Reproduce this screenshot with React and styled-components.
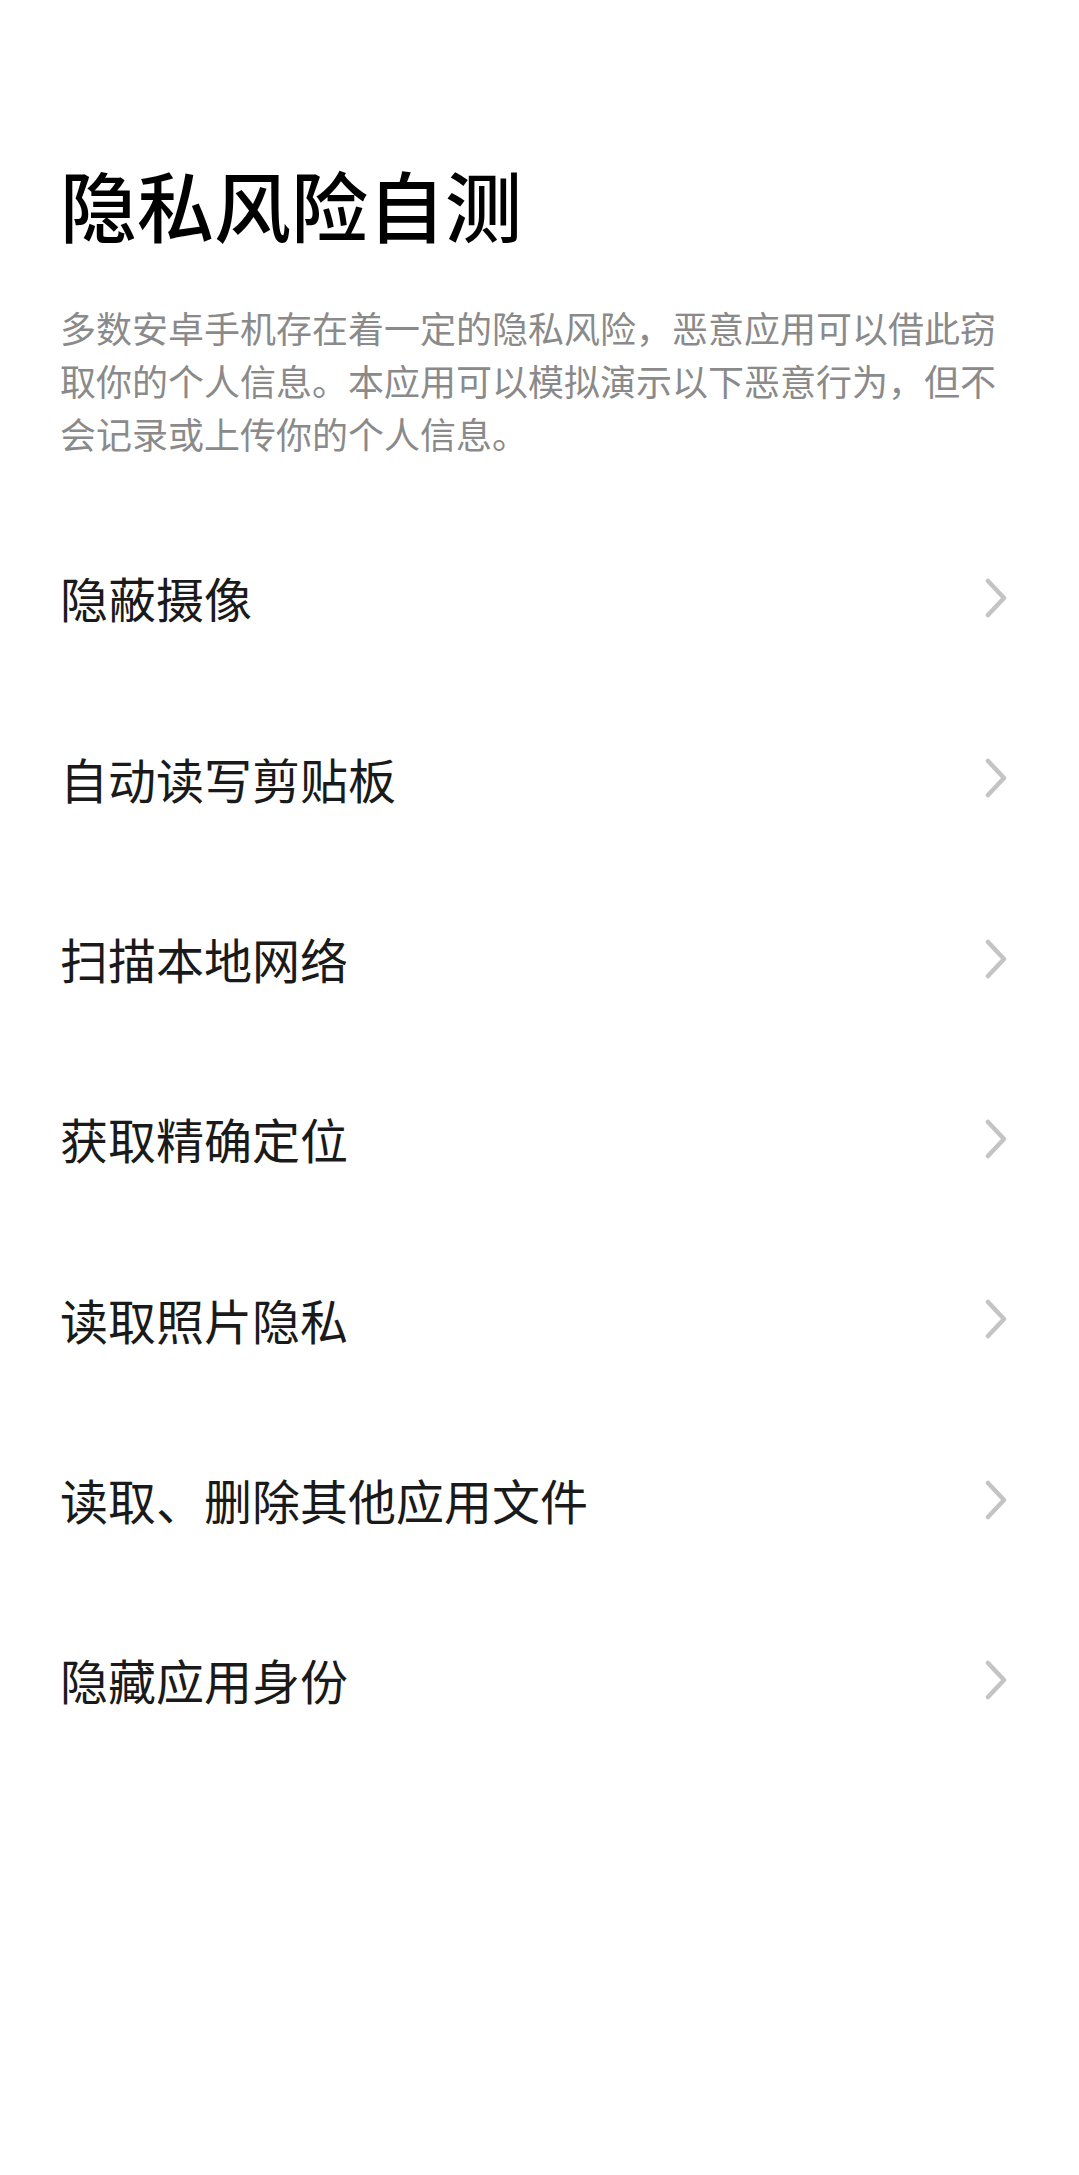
import React from "react";
import styled, { createGlobalStyle } from "styled-components";

const GlobalStyle = createGlobalStyle`
  html, body {
    margin: 0;
    padding: 0;
    background: #ffffff;
  }
  body {
    font-family: "Noto Sans CJK SC", "Noto Sans", sans-serif;
    -webkit-font-smoothing: antialiased;
  }
`;

const Page = styled.main`
  box-sizing: border-box;
  width: 1079px;
  min-height: 2175px;
  padding: 158px 62px 0 60px;
  display: flex;
  flex-direction: column;
  background: #ffffff;
`;

const Title = styled.h1`
  margin: 0;
  font-size: 77px;
  line-height: 92px;
  font-weight: 500;
  color: #000000;
  letter-spacing: 0;
`;

const Description = styled.p`
  margin: 51px 0 0 0;
  font-size: 36px;
  line-height: 53px;
  font-weight: 400;
  color: #8a8a8a;
`;

const List = styled.ul`
  list-style: none;
  margin: 48px 0 0 0;
  padding: 0;
  display: flex;
  flex-direction: column;
`;

const Row = styled.li`
  height: 180.3px;
  display: flex;
  align-items: center;
  justify-content: space-between;
  padding-right: 8px;
  cursor: pointer;
`;

const Label = styled.span`
  font-size: 48px;
  line-height: 1.2;
  color: #1a1a1a;
  font-weight: 400;
`;

const Chevron = () => (
  <svg width="26" height="40" viewBox="0 0 26 40" fill="none">
    <path
      d="M5 3 L21 20 L5 37"
      stroke="#c4c4c4"
      strokeWidth="4.5"
      strokeLinecap="round"
      strokeLinejoin="round"
    />
  </svg>
);

const items = [
  "隐蔽摄像",
  "自动读写剪贴板",
  "扫描本地网络",
  "获取精确定位",
  "读取照片隐私",
  "读取、删除其他应用文件",
  "隐藏应用身份",
];

export default function App() {
  return (
    <>
      <GlobalStyle />
      <Page>
        <Title>隐私风险自测</Title>
        <Description>
          多数安卓手机存在着一定的隐私风险，恶意应用可以借此窃取你的个人信息。本应用可以模拟演示以下恶意行为，但不会记录或上传你的个人信息。
        </Description>
        <List>
          {items.map((item) => (
            <Row key={item}>
              <Label>{item}</Label>
              <Chevron />
            </Row>
          ))}
        </List>
      </Page>
    </>
  );
}
